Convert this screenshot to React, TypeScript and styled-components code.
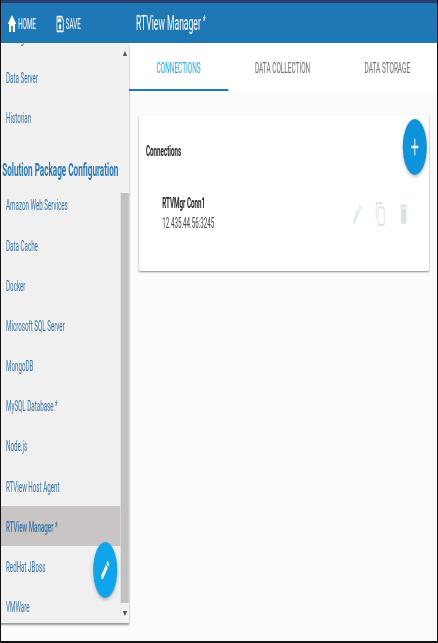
import React, { useLayoutEffect, useRef } from 'react';
import styled, { createGlobalStyle } from 'styled-components';
import { MdHome, MdOutlineSave, MdEdit, MdAdd, MdOutlineContentCopy, MdDelete } from 'react-icons/md';

const topItems = ['Alert Engine', 'Configuration', 'Data Server', 'Historian'];
const packageItems = [
    'Amazon Web Services',
    'Data Cache',
    'Docker',
    'Microsoft SQL Server',
    'MongoDB',
    'MySQL Database *',
    'Node.js',
    'RTView Host Agent',
    'RTView Manager *',
    'RedHat JBoss',
    'VMWare',
];

const App = () => {
    const listRef = useRef<HTMLDivElement>(null);

    useLayoutEffect(() => {
        const el = listRef.current;
        if (!el) return;
        el.scrollTop = el.scrollHeight - el.clientHeight - 4;
    }, []);

    return (
        <Stage>
            <GlobalStyle />
            <Squeezed>
                <TopStrip />
                <Header>
                    <HeaderNav>
                        <HeaderBtn><MdHome size={24} />HOME</HeaderBtn>
                        <HeaderBtn><MdOutlineSave size={22} />SAVE</HeaderBtn>
                    </HeaderNav>
                    <Title>RTView Manager <Star>*</Star></Title>
                </Header>
                <Body>
                    <Sidebar>
                        <NavList ref={listRef}>
                            {topItems.map(item => <NavRow key={item}>{item}</NavRow>)}
                            <NavHeading>Solution Package Configuration</NavHeading>
                            {packageItems.map(item => (
                                <NavRow key={item} selected={item === 'RTView Manager *'}>{item}</NavRow>
                            ))}
                        </NavList>
                        <ScrollBar>
                            <ScrollArrow />
                            <ScrollTrack><ScrollThumb /></ScrollTrack>
                            <ScrollArrow down />
                        </ScrollBar>
                        <EditFab><MdEdit size={24} /></EditFab>
                    </Sidebar>
                    <Main>
                        <Tabs>
                            <Tab active>CONNECTIONS</Tab>
                            <Tab>DATA COLLECTION</Tab>
                            <Tab>DATA STORAGE</Tab>
                        </Tabs>
                        <Card>
                            <CardTitle>Connections</CardTitle>
                            <AddFab><MdAdd size={28} /></AddFab>
                            <ConnRow>
                                <ConnInfo>
                                    <ConnName>RTVMgr Conn1</ConnName>
                                    <ConnAddr>12.435.44.56:3245</ConnAddr>
                                </ConnInfo>
                                <ConnActions>
                                    <MdEdit size={26} color="#e1ebf2" />
                                    <MdOutlineContentCopy size={26} color="#dfe3e6" />
                                    <MdDelete size={26} color="#d9e4e4" />
                                </ConnActions>
                            </ConnRow>
                        </Card>
                    </Main>
                </Body>
            </Squeezed>
        </Stage>
    );
};

const GlobalStyle = createGlobalStyle`
    html, body {
        margin: 0;
        padding: 0;
        background: #000;
        overflow: hidden;
    }
    body {
        font-family: Roboto, 'Liberation Sans', sans-serif;
    }
`;

const Stage = styled.div`
    width: 438px;
    height: 643px;
    box-sizing: border-box;
    border-left: 1px solid #111;
    border-right: 1px solid #111;
    border-bottom: 2px solid #111;
    overflow: hidden;
    background: #fbfbfb;
`;

// the reference is a 1020px wide page squeezed to fit the window
const Squeezed = styled.div`
    width: 1020px;
    height: 641px;
    margin-left: -1px;
    transform: scaleX(0.4294);
    transform-origin: left top;
    display: flex;
    flex-direction: column;
`;

const TopStrip = styled.div`
    height: 3px;
    background: #2b3c6e;
`;

const Header = styled.header`
    height: 40px;
    background: #1f78b6;
    color: #fff;
    display: flex;
    align-items: center;
    flex-shrink: 0;
`;

const HeaderNav = styled.nav`
    width: 317px;
    padding: 2px 0 0 16px;
    box-sizing: border-box;
    display: flex;
    gap: 46px;
`;

const HeaderBtn = styled.div`
    display: flex;
    align-items: center;
    gap: 2px;
    font-size: 14.5px;
    font-weight: 400;
`;

const Title = styled.div`
    font-size: 20px;
    font-weight: 400;
    margin-top: -1px;
`;

const Star = styled.span`
    font-size: 14px;
    vertical-align: 4px;
`;

const Body = styled.div`
    flex: 1;
    display: flex;
    min-height: 0;
`;

const Sidebar = styled.aside`
    position: relative;
    width: 300px;
    height: 580px;
    background: #f0f0f0;
    box-shadow: 0 2px 3px rgba(0, 0, 0, 0.4);
    flex-shrink: 0;
`;

const NavList = styled.div`
    height: 100%;
    width: 281px;
    overflow: hidden;
`;

const ScrollBar = styled.div`
    position: absolute;
    top: 0;
    right: 0;
    bottom: 0;
    width: 19px;
    display: flex;
    flex-direction: column;
    background: #f1f1f1;
`;

const ScrollArrow = styled.div<{ down?: boolean }>`
    height: 20px;
    display: flex;
    align-items: center;
    justify-content: center;
    flex-shrink: 0;

    &::before {
        content: '';
        border-left: 5px solid transparent;
        border-right: 5px solid transparent;
        border-${p => (p.down ? 'top' : 'bottom')}: 5px solid #555;
    }
`;

const ScrollTrack = styled.div`
    flex: 1;
    padding-top: 130px;
    display: flex;
    min-height: 0;
`;

const ScrollThumb = styled.div`
    flex: 1;
    background: #c1c1c1;
`;

const NavRow = styled.div<{ selected?: boolean }>`
    height: 40.2px;
    padding: 2px 0 0 14px;
    box-sizing: border-box;
    display: flex;
    align-items: center;
    font-size: 14.5px;
    color: #3a76a8;
    font-weight: ${p => (p.selected ? 500 : 400)};
    background: ${p => (p.selected ? '#c9c5c5' : 'transparent')};
`;

const NavHeading = styled.div`
    height: 47px;
    padding: 16px 0 0 5px;
    box-sizing: border-box;
    display: flex;
    align-items: center;
    font-size: 19px;
    font-weight: 700;
    color: #2a78b8;
    white-space: nowrap;
`;

const EditFab = styled.div`
    position: absolute;
    right: 27px;
    bottom: 25px;
    width: 56px;
    height: 56px;
    border-radius: 50%;
    background: #0ea5ec;
    color: #fff;
    display: flex;
    align-items: center;
    justify-content: center;
    box-shadow: 0 2px 5px rgba(0, 0, 0, 0.26);
`;

const Main = styled.main`
    flex: 1;
    min-width: 0;
    display: flex;
    flex-direction: column;
`;

const Tabs = styled.div`
    display: grid;
    grid-template-columns: 232px 252px 1fr;
    height: 48px;
    background: #fff;
`;

const Tab = styled.div<{ active?: boolean }>`
    display: flex;
    align-items: center;
    justify-content: center;
    font-size: 15px;
    padding-top: 3px;
    box-sizing: border-box;
    color: ${p => (p.active ? '#22a7ee' : '#6f6f6f')};
    border-bottom: 2px solid ${p => (p.active ? '#1f78b6' : 'transparent')};
`;

const Card = styled.section`
    position: relative;
    margin: 24px 21px 0 24px;
    height: 156px;
    padding: 29px 16px 0;
    box-sizing: border-box;
    background: #fff;
    border-radius: 2px;
    box-shadow: 0 1px 3px rgba(0, 0, 0, 0.45);
`;

const CardTitle = styled.div`
    font-size: 14.5px;
    font-weight: 700;
    color: #222;
    line-height: 16px;
`;

const AddFab = styled.div`
    position: absolute;
    top: 4px;
    right: 5px;
    width: 56px;
    height: 56px;
    border-radius: 50%;
    background: #0e94dc;
    color: #fff;
    display: flex;
    align-items: center;
    justify-content: center;
    box-shadow: 0 2px 5px rgba(0, 0, 0, 0.26);
`;

const ConnRow = styled.div`
    display: flex;
    justify-content: space-between;
    align-items: center;
    margin-top: 35px;
    padding: 0 30px 0 38px;
`;

const ConnInfo = styled.div`
    display: flex;
    flex-direction: column;
    gap: 3px;
`;

const ConnName = styled.div`
    font-size: 14.5px;
    font-weight: 700;
    color: #222;
`;

const ConnAddr = styled.div`
    font-size: 14.5px;
    color: #444;
`;

const ConnActions = styled.div`
    display: flex;
    gap: 28px;
`;

export default App;
